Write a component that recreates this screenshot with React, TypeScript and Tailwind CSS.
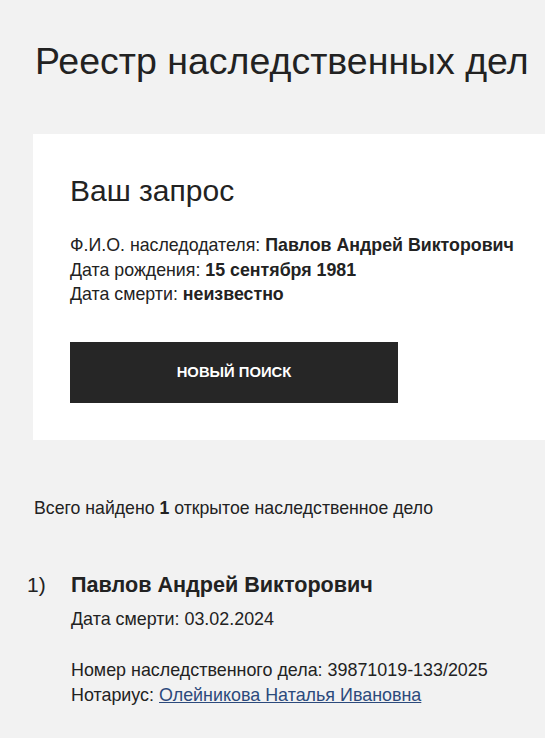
export default function App() {
  return (
    <div
      className="min-h-[738px] w-full overflow-hidden bg-[#f2f2f2] text-[#222]"
      style={{ fontFamily: '"Liberation Sans", Arial, sans-serif' }}
    >
      <h1 className="pl-[35px] pt-[39px] text-[37.5px] leading-[44px] font-normal">Реестр наследственных дел</h1>

      <div className="ml-[33px] mt-[51px] w-[560px] bg-white pl-[37px] pt-[40px] pb-[37px]">
        <h2 className="text-[30px] leading-[34px] font-normal">Ваш запрос</h2>
        <div className="mt-[25px] text-[17.8px] leading-[24.5px]">
          <div>
            Ф.И.О. наследодателя: <b>Павлов Андрей Викторович</b>
          </div>
          <div>
            Дата рождения: <b>15 сентября 1981</b>
          </div>
          <div>
            Дата смерти: <b>неизвестно</b>
          </div>
        </div>
        <button
          type="button"
          className="mt-[35.5px] flex h-[61px] w-[328px] items-center justify-center bg-[#262626] text-[14.8px] font-bold text-white uppercase"
        >
          Новый поиск
        </button>
      </div>

      <p className="mt-[56px] pl-[34px] text-[17.7px] leading-[24px]">
        Всего найдено <b>1</b> открытое наследственное дело
      </p>

      <div className="mt-[51px] flex pl-[27px]">
        <div className="w-[44px] text-[21px] leading-[28px]">1)</div>
        <div>
          <div className="text-[21.6px] leading-[28px] font-bold">Павлов Андрей Викторович</div>
          <div className="mt-[8px] text-[17.9px] leading-[24px]">Дата смерти: 03.02.2024</div>
          <div className="mt-[26.5px] text-[17.9px] leading-[25px]">
            <div>Номер наследственного дела: 39871019-133/2025</div>
            <div>
              Нотариус:{' '}
              <a href="#" className="text-[#2c4a7c] underline">
                Олейникова Наталья Ивановна
              </a>
            </div>
          </div>
        </div>
      </div>
    </div>
  );
}
